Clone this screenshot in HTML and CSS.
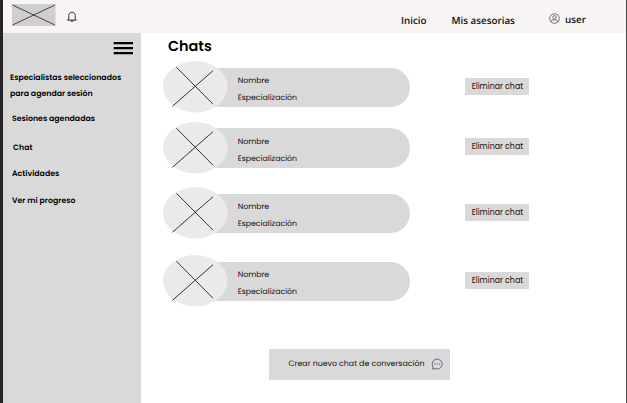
FILE: index.html
```html
<!DOCTYPE html>
<html lang="es">
<head>
<meta charset="utf-8">
<title>Chats</title>
<link rel="stylesheet" href="styles.css">
</head>
<body>
<svg class="defs" aria-hidden="true">
  <symbol id="avatar" viewBox="0 0 65 52">
    <ellipse cx="32.3" cy="25.7" rx="32.3" ry="25.7" fill="#ebe9ea"/>
    <path d="M13.4 6.2 50 43.2M50 9.7 9.3 45.4" stroke="#222" stroke-width=".9" fill="none"/>
  </symbol>
</svg>
<div class="app">
  <header class="topbar">
    <svg class="logo" viewBox="0 0 44 22"><path d="M0 0h43.5v22H0z" fill="#d0cecf"/><path d="M.5 1 43 21M43 1 .5 21" stroke="#333" stroke-width=".9"/></svg>
    <svg class="bell" viewBox="0 0 10 12" fill="none" stroke="#222" stroke-width=".95" stroke-linecap="round" stroke-linejoin="round"><path d="M.8 9.1h8.4L8.2 7.7V4.5C8.2 2.5 6.9 1.2 5 1.2S1.8 2.5 1.8 4.5v3.2zM3.6 9.4c.2 1.7 2.6 1.7 2.8 0"/></svg>
    <nav class="nav">
      <a class="home">Inicio</a>
      <a class="advice">Mis asesorias</a>
      <a class="user"><svg class="user-icon" viewBox="0 0 11 11" fill="none" stroke="#4b5264" stroke-width=".8"><circle cx="5.5" cy="5.5" r="4.8"/><circle cx="5.5" cy="4.3" r="1.7"/><path d="M2.5 8.9V8.2c0-.8.7-1.3 1.5-1.3h3c.8 0 1.5.5 1.5 1.3v.7"/></svg><span>user</span></a>
    </nav>
  </header>
  <div class="body">
    <aside class="sidebar">
      <svg class="menu" viewBox="0 0 20 13"><path d="M.7 0H20v2.3H.7zM.7 5H20v2.3H.7zM.7 10H20v2.3H.7z"/></svg>
      <a class="item specialists">Especialistas seleccionados<br>para agendar sesión</a>
      <a class="item sessions">Sesiones agendadas</a>
      <a class="item chat">Chat</a>
      <a class="item activities">Actividades</a>
      <a class="item progress">Ver mi progreso</a>
    </aside>
    <main class="main">
      <h1>Chats</h1>
      <section class="list">
        <div class="row"><svg class="avatar"><use href="#avatar"/></svg><div class="card"><p>Nombre</p><p>Especialización</p></div><button>Eliminar chat</button></div>
        <div class="row"><svg class="avatar"><use href="#avatar"/></svg><div class="card"><p>Nombre</p><p>Especialización</p></div><button>Eliminar chat</button></div>
        <div class="row"><svg class="avatar"><use href="#avatar"/></svg><div class="card"><p>Nombre</p><p>Especialización</p></div><button>Eliminar chat</button></div>
        <div class="row"><svg class="avatar"><use href="#avatar"/></svg><div class="card"><p>Nombre</p><p>Especialización</p></div><button>Eliminar chat</button></div>
      </section>
      <div class="create"><span>Crear nuevo chat de conversación</span><svg class="bubble" viewBox="0 0 12 12" fill="none" stroke="#4b5675" stroke-width=".85" stroke-linejoin="round"><path d="M1.6 11 1.9 8.7A5 5 0 1 1 4 10.6z"/><path d="M3.2 6h1.1M5.5 6h1.1M7.8 6h1.1" stroke-width="1.1"/></svg></div>
    </main>
  </div>
</div>
</body>
</html>
```
FILE: styles.css
```css
* { box-sizing: border-box; }
body { margin: 0; background: #fff; font-family: Poppins, Inter, sans-serif; color: #111; text-rendering: geometricPrecision; }
svg { display: block; flex: none; }
.defs { position: absolute; width: 0; height: 0; }
.app { height: 403px; border-left: 3px solid #252326; border-right: 1px solid #444; overflow: hidden; display: flex; flex-direction: column; }
.topbar { height: 33px; flex: none; background: #f8f4f3; display: flex; padding-left: 9px; }
.logo { width: 44px; height: 22px; margin-top: 4px; }
.bell { width: 10px; height: 12px; margin: 11px 0 0 11px; }
.nav { display: flex; flex: 1; padding-left: 324px; font: 600 9.8px/14px "Open Sans", sans-serif; white-space: nowrap; }
.nav a { margin-top: 14px; }
.home { width: 50.5px; }
.advice { width: 97.5px; }
.nav .user { display: flex; margin-top: 12px; gap: 5px; }
.user span { margin-top: 1px; }
.user-icon { width: 11px; height: 11px; margin-top: 1px; }
.body { display: flex; flex: 1; }
.sidebar { width: 138px; background: #d9d9d9; padding: 9px 0 0 7px; display: flex; flex-direction: column; }
.menu { width: 20px; height: 13px; margin-left: 103px; }
.item { font-size: 7.8px; font-weight: 600; line-height: 16px; white-space: nowrap; color: #000; }
.specialists { margin-top: 15px; }
.sessions { margin: 9px 0 0 2px; }
.chat { margin: 13px 0 0 3px; }
.activities { margin: 10px 0 0 2px; }
.progress { margin: 11px 0 0 2px; }
.main { flex: 1; padding-left: 22px; }
h1 { margin: 4px 0 0 5px; padding-top: 1px; font-size: 14.4px; line-height: 19px; font-weight: 600; color: #000; }
.list { display: grid; grid-template-rows: 60.5px 65.5px 68px 52px; margin-top: 4px; }
.row { display: flex; height: 52px; align-items: center; }
.avatar { width: 65px; height: 52px; z-index: 1; }
.card { width: 213.5px; height: 39.5px; margin: 1px 0 0 -32px; padding: 5.6px 0 0 41.7px; background: #d9d9d9; border-radius: 0 20px 20px 0; }
.card p { margin: 0; font-size: 7.8px; line-height: 16.7px; white-space: nowrap; }
button { width: 64px; height: 17px; margin: -2px 0 0 55.9px; padding: 0; border: 0; background: #d9d9d9; font: 7.9px/17px Poppins, Inter, sans-serif; color: #111; white-space: nowrap; }
.create { width: 181px; height: 31px; margin: 41.5px 0 0 106px; padding: 0 7px 0 19.5px; background: #d9d9d9; display: flex; align-items: center; justify-content: space-between; font-size: 7.85px; white-space: nowrap; }
.bubble { width: 12px; height: 12px; }
```
